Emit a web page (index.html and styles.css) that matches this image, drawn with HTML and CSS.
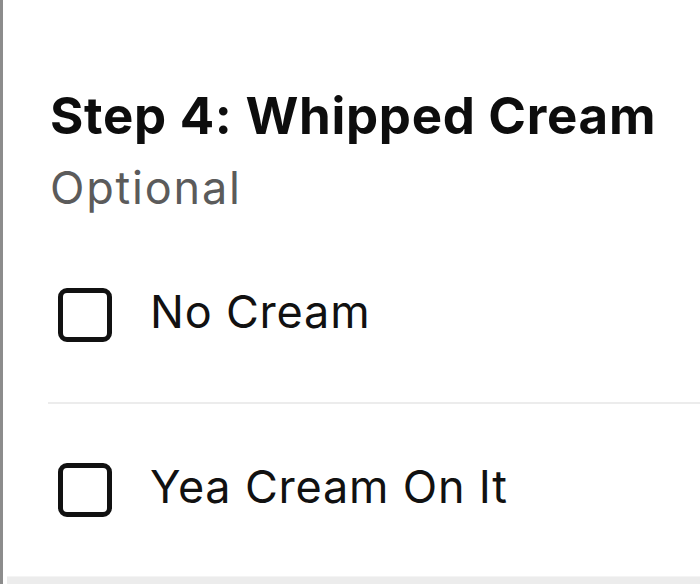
FILE: index.html
```html
<!DOCTYPE html>
<html>
<head>
<meta charset="utf-8">
<link rel="stylesheet" href="styles.css">
</head>
<body>
<div class="page">
  <section class="panel">
    <h2 class="title">Step 4: Whipped Cream</h2>
    <p class="subtitle">Optional</p>
    <ul class="options">
      <li class="option"><span class="box"></span><span class="label">No Cream</span></li>
      <li class="option"><span class="box"></span><span class="label">Yea Cream On It</span></li>
    </ul>
  </section>
  <div class="footer"></div>
</div>
</body>
</html>
```
FILE: styles.css
```css
html, body {
  margin: 0;
  padding: 0;
  background: #fff;
}
body {
  font-family: Inter, "Liberation Sans", sans-serif;
  color: #111;
}
.page {
  width: 700px;
  height: 584px;
  display: flex;
  flex-direction: column;
  border-left: 3px solid #8c8c8c;
  box-sizing: border-box;
  overflow: hidden;
}
.panel {
  flex: 1;
  padding: 86px 0 0 47px;
}
.title {
  margin: 0;
  font-size: 51px;
  line-height: 60px;
  font-weight: 700;
  letter-spacing: 0.7px;
  color: #0d0d0d;
}
.subtitle {
  margin: 0;
  padding-top: 14px;
  font-size: 45px;
  line-height: 56px;
  letter-spacing: 1.8px;
  color: #5b5b5b;
  font-weight: 400;
}
.options {
  list-style: none;
  margin: 12px 0 0 -2px;
  padding: 0;
}
.option {
  display: flex;
  align-items: center;
  gap: 38px;
  height: 174px;
  padding-left: 10px;
  box-sizing: border-box;
}
.option + .option {
  border-top: 2px solid #ececec;
}
.box {
  width: 54px;
  height: 54px;
  box-sizing: border-box;
  border: 5px solid #111;
  border-radius: 9px;
  flex: none;
}
.label {
  font-size: 45px;
  line-height: 50px;
  letter-spacing: 0.8px;
  margin-top: -6px;
}
.footer {
  height: 11px;
  background: #ececec;
  border-top: 1px solid #f4f4f4;
  margin-left: 4px;
}
```
